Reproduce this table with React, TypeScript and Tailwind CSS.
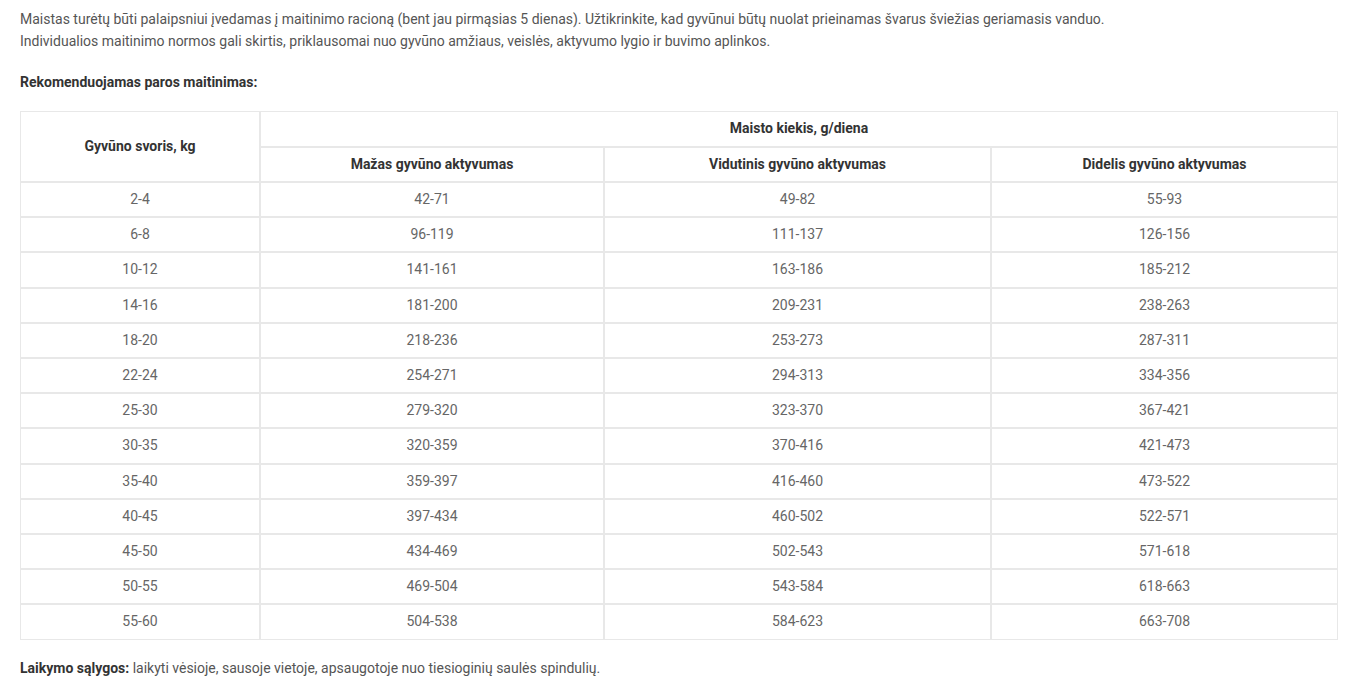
import React from "react";

const rows: [string, string, string, string][] = [
  ["2-4", "42-71", "49-82", "55-93"],
  ["6-8", "96-119", "111-137", "126-156"],
  ["10-12", "141-161", "163-186", "185-212"],
  ["14-16", "181-200", "209-231", "238-263"],
  ["18-20", "218-236", "253-273", "287-311"],
  ["22-24", "254-271", "294-313", "334-356"],
  ["25-30", "279-320", "323-370", "367-421"],
  ["30-35", "320-359", "370-416", "421-473"],
  ["35-40", "359-397", "416-460", "473-522"],
  ["40-45", "397-434", "460-502", "522-571"],
  ["45-50", "434-469", "502-543", "571-618"],
  ["50-55", "469-504", "543-584", "618-663"],
  ["55-60", "504-538", "584-623", "663-708"],
];

const th = "border border-[#e8e8e8] text-center font-bold text-[#333] text-[14px] leading-[19.5px] py-[7px]";
const td = "border border-[#e8e8e8] text-center text-[#666] text-[14px] leading-[19.2px] py-[7px]";

export default function App() {
  return (
    <div className="bg-white min-h-screen pl-5 pr-[18px] pt-2 text-[14px] leading-[22px] text-[#555] font-['Roboto',sans-serif]">
      <p>
        Maistas turėtų būti palaipsniui įvedamas į maitinimo racioną (bent jau pirmąsias 5 dienas). Užtikrinkite, kad gyvūnui būtų nuolat prieinamas švarus šviežias geriamasis vanduo.
        <br />
        Individualios maitinimo normos gali skirtis, priklausomai nuo gyvūno amžiaus, veislės, aktyvumo lygio ir buvimo aplinkos.
      </p>
      <p className="mt-[19px] font-bold text-[#333]">Rekomenduojamas paros maitinimas:</p>

      <table className="mt-[18px] w-[1318px] table-fixed border-separate border-spacing-0">
        <colgroup>
          <col className="w-[240px]" />
          <col className="w-[344px]" />
          <col className="w-[387px]" />
          <col className="w-[347px]" />
        </colgroup>
        <thead>
          <tr>
            <th rowSpan={2} className={th}>
              Gyvūno svoris, kg
            </th>
            <th colSpan={3} className={th}>
              Maisto kiekis, g/diena
            </th>
          </tr>
          <tr>
            <th className={th}>Mažas gyvūno aktyvumas</th>
            <th className={th}>Vidutinis gyvūno aktyvumas</th>
            <th className={th}>Didelis gyvūno aktyvumas</th>
          </tr>
        </thead>
        <tbody>
          {rows.map((r) => (
            <tr key={r[0]}>
              {r.map((c, i) => (
                <td key={i} className={td}>
                  {c}
                </td>
              ))}
            </tr>
          ))}
        </tbody>
      </table>

      <p className="mt-[17px]">
        <span className="font-bold text-[#333]">Laikymo sąlygos:</span> laikyti vėsioje, sausoje vietoje, apsaugotoje nuo tiesioginių saulės spindulių.
      </p>
    </div>
  );
}
